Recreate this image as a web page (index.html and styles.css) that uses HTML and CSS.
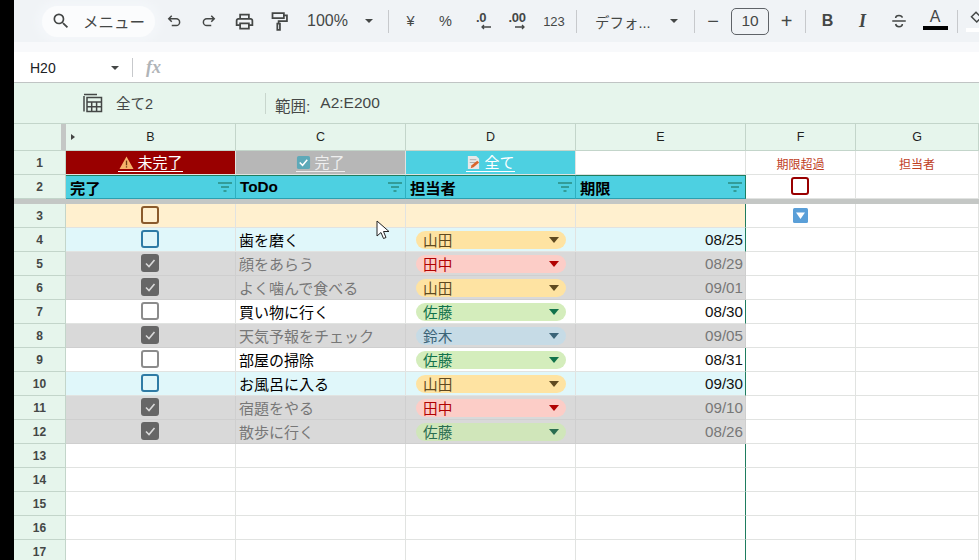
FILE: index.html
```html
<!DOCTYPE html>
<html lang="ja">
<head>
<meta charset="utf-8">
<title>ToDo</title>
<link rel="stylesheet" href="styles.css">
</head>
<body>
<div class="app">
  <div class="strip"></div>
  <div class="main">
    <div class="toolwrap">
      <div class="toolbar">
        <div class="pill">
          <svg class="ic-search" viewBox="0 0 24 24"><path d="M15.5 14h-.79l-.28-.27A6.47 6.47 0 0 0 16 9.5 6.5 6.5 0 1 0 9.5 16c1.61 0 3.09-.59 4.23-1.57l.27.28v.79l5 4.99L20.49 19l-4.99-5zm-6 0C7.01 14 5 11.99 5 9.5S7.01 5 9.5 5 14 7.01 14 9.5 11.99 14 9.5 14z"/></svg>
          <span class="pilltext">メニュー</span>
        </div>
        <div class="tool w35"><svg class="ic" viewBox="0 0 24 24"><path class="st" d="M9 5 5 9l4 4M5 9h10a4.500 4.500 0 0 1 0 9H9"/></svg></div>
        <div class="tool w35"><svg class="ic" viewBox="0 0 24 24"><path class="st" d="m15 5 4 4-4 4M19 9H9a4.500 4.500 0 0 0 0 9h6"/></svg></div>
        <div class="tool w36"><svg class="ic lg" viewBox="0 0 24 24"><path d="M19 8h-1V3H6v5H5c-1.660 0-3 1.340-3 3v6h4v4h12v-4h4v-6c0-1.660-1.340-3-3-3zM8 5h8v3H8V5zm8 12v2H8v-4h8v2zm2-2v-2H6v2H4v-4c0-.550.450-1 1-1h14c.550 0 1 .450 1 1v4h-2z"/></svg></div>
        <div class="tool w35"><svg class="ic lg" viewBox="0 0 24 24"><path class="st" d="M4 2.500h13v5.500H4zM17 5h3.500v6.500H11v3M9.500 14.500h3v7h-3z"/></svg></div>
        <div class="zoomval">100%</div>
        <div class="tool w18"><i class="caret"></i></div>
        <div class="sep sep1"></div>
        <div class="tool w35 small m1">¥</div>
        <div class="tool w35 small">%</div>
        <div class="tool w36 deci"><span class="dec">.0</span><svg class="arr arr-l" viewBox="0 0 12 6"><path class="st2" d="M11 3H2M4 1 2 3l2 2"/></svg></div>
        <div class="tool w36 deci"><span class="dec">.00</span><svg class="arr" viewBox="0 0 12 6"><path class="st2" d="M1 3h9M8 1l2 2-2 2"/></svg></div>
        <div class="tool w38 num">123</div>
        <div class="sep sep2"></div>
        <div class="fontname">デフォ...</div>
        <div class="tool w18"><i class="caret"></i></div>
        <div class="sep sep3"></div>
        <div class="tool w35 sym">−</div>
        <div class="sizebox">10</div>
        <div class="tool w35 sym">+</div>
        <div class="sep sep4"></div>
        <div class="tool w35 bold">B</div>
        <div class="tool w35 ital">I</div>
        <div class="tool w37"><svg class="ic" viewBox="0 0 24 24"><path class="st" d="M16.500 7.500C16 5.500 14 4.500 12 4.500S7.500 5.500 7.500 8M3 12h18M7.500 16c.5 2.500 2.500 3.500 4.500 3.500s4.500-1 4.500-3.500"/></svg></div>
        <div class="tool w35 colora"><span class="alabel">A</span><i class="abar"></i></div>
        <div class="sep sep5"></div>
        <div class="tool w35 fill"><svg class="ic" viewBox="0 0 24 24"><path class="st" d="m12 3 7 7-6 6-7-7z"/></svg><i class="fbar"></i></div>
      </div>
      <div class="fade"></div>
    </div>
    <div class="formula">
      <div class="namebox">H20</div>
      <i class="caret f-caret"></i>
      <div class="sep f-sep"></div>
      <div class="fx">fx</div>
    </div>
    <div class="sumbar">
      <svg class="ic-calc" viewBox="0 0 20 20"><path class="st3" d="M1 3v15.500M1 1.500h13M4 4.500h14.500v14H4zM4 9h14.500M4 13.800h14.500M8.700 9v9.500M13.600 9v9.500"/></svg>
      <span class="sumname">全て2</span>
      <div class="sep s-sep"></div>
      <span class="rangelabel">範囲:</span>
      <span class="rangeval">A2:E200</span>
    </div>
    <div class="sheet">
      <div class="row">
        <div class="cell head corner"></div>
        <div class="cell head colb"><i class="tri"></i>B</div>
        <div class="cell head">C</div>
        <div class="cell head">D</div>
        <div class="cell head">E</div>
        <div class="cell head">F</div>
        <div class="cell head">G</div>
      </div>
      <div class="row">
        <div class="cell rn">1</div>
        <div class="cell tab t-red"><a class="tablink"><svg class="emoji em-warn" viewBox="0 0 16 16"><path d="M8 1.500 15.500 15H.5z" fill="#f6b26b"/><rect x="7.300" y="6" width="1.400" height="5" fill="#6b3a12"/><rect x="7.300" y="12" width="1.400" height="1.400" fill="#6b3a12"/></svg>未完了</a></div>
        <div class="cell tab t-gray"><a class="tablink l-soft"><svg class="emoji" viewBox="0 0 16 16"><rect x="1" y="1" width="14" height="14" rx="2" fill="#5ea9b8"/><path d="m4 8 3 3 5-6" fill="none" stroke="#fff" stroke-width="1.600"/></svg>完了</a></div>
        <div class="cell tab t-teal"><a class="tablink"><svg class="emoji" viewBox="0 0 16 16"><path d="M2 1h9l3 3v11H2z" fill="#e8e8e8"/><path d="M4 5h7M4 8h7" stroke="#aaa"/><path d="m5 14 1-3 6-5 2 2-6 5z" fill="#d9652b"/></svg>全て</a></div>
        <div class="cell"></div>
        <div class="cell note">期限超過</div>
        <div class="cell note">担当者</div>
      </div>
      <div class="row">
        <div class="cell rn">2</div>
        <div class="cell thd">完了<svg class="flt" viewBox="0 0 14 10"><path d="M0 1h14M3 5h8M5.500 9h3"/></svg></div>
        <div class="cell thd">ToDo<svg class="flt" viewBox="0 0 14 10"><path d="M0 1h14M3 5h8M5.500 9h3"/></svg></div>
        <div class="cell thd">担当者<svg class="flt" viewBox="0 0 14 10"><path d="M0 1h14M3 5h8M5.500 9h3"/></svg></div>
        <div class="cell thd edge">期限<svg class="flt" viewBox="0 0 14 10"><path d="M0 1h14M3 5h8M5.500 9h3"/></svg></div>
        <div class="cell ctr"><i class="box b-red"></i></div>
        <div class="cell"></div>
      </div>
      <div class="freeze"></div>
      <div class="row r-orange">
        <div class="cell rn">3</div>
        <div class="cell ctr"><i class="box b-brown"></i></div>
        <div class="cell"></div>
        <div class="cell"></div>
        <div class="cell edge"></div>
        <div class="cell ctr plain"><svg class="fltbtn" viewBox="0 0 15 15"><rect width="15" height="15" rx="1.500" fill="#5a9fd8"/><path d="M3 4.500h9l-4.500 6.500z" fill="#fff"/></svg></div>
        <div class="cell plain"></div>
      </div>
      <div class="row r-blue">
        <div class="cell rn">4</div>
        <div class="cell ctr"><i class="box b-blue"></i></div>
        <div class="cell txt">歯を磨く</div>
        <div class="cell chipc"><span class="chip yellow">山田<i class="ca"></i></span></div>
        <div class="cell date edge">08/25</div>
        <div class="cell plain"></div>
        <div class="cell plain"></div>
      </div>
      <div class="row r-done">
        <div class="cell rn">5</div>
        <div class="cell ctr"><i class="box checked"><svg viewBox="0 0 14 14"><path d="m3 7.500 3 3 5.500-6.500"/></svg></i></div>
        <div class="cell txt">顔をあらう</div>
        <div class="cell chipc"><span class="chip red">田中<i class="ca"></i></span></div>
        <div class="cell date edge">08/29</div>
        <div class="cell plain"></div>
        <div class="cell plain"></div>
      </div>
      <div class="row r-done">
        <div class="cell rn">6</div>
        <div class="cell ctr"><i class="box checked"><svg viewBox="0 0 14 14"><path d="m3 7.500 3 3 5.500-6.500"/></svg></i></div>
        <div class="cell txt">よく噛んで食べる</div>
        <div class="cell chipc"><span class="chip yellow">山田<i class="ca"></i></span></div>
        <div class="cell date edge">09/01</div>
        <div class="cell plain"></div>
        <div class="cell plain"></div>
      </div>
      <div class="row">
        <div class="cell rn">7</div>
        <div class="cell ctr"><i class="box"></i></div>
        <div class="cell txt">買い物に行く</div>
        <div class="cell chipc"><span class="chip green">佐藤<i class="ca"></i></span></div>
        <div class="cell date edge">08/30</div>
        <div class="cell plain"></div>
        <div class="cell plain"></div>
      </div>
      <div class="row r-done">
        <div class="cell rn">8</div>
        <div class="cell ctr"><i class="box checked"><svg viewBox="0 0 14 14"><path d="m3 7.500 3 3 5.500-6.500"/></svg></i></div>
        <div class="cell txt">天気予報をチェック</div>
        <div class="cell chipc"><span class="chip blue">鈴木<i class="ca"></i></span></div>
        <div class="cell date edge">09/05</div>
        <div class="cell plain"></div>
        <div class="cell plain"></div>
      </div>
      <div class="row">
        <div class="cell rn">9</div>
        <div class="cell ctr"><i class="box"></i></div>
        <div class="cell txt">部屋の掃除</div>
        <div class="cell chipc"><span class="chip green">佐藤<i class="ca"></i></span></div>
        <div class="cell date edge">08/31</div>
        <div class="cell plain"></div>
        <div class="cell plain"></div>
      </div>
      <div class="row r-blue">
        <div class="cell rn">10</div>
        <div class="cell ctr"><i class="box b-blue"></i></div>
        <div class="cell txt">お風呂に入る</div>
        <div class="cell chipc"><span class="chip yellow">山田<i class="ca"></i></span></div>
        <div class="cell date edge">09/30</div>
        <div class="cell plain"></div>
        <div class="cell plain"></div>
      </div>
      <div class="row r-done">
        <div class="cell rn">11</div>
        <div class="cell ctr"><i class="box checked"><svg viewBox="0 0 14 14"><path d="m3 7.500 3 3 5.500-6.500"/></svg></i></div>
        <div class="cell txt">宿題をやる</div>
        <div class="cell chipc"><span class="chip red">田中<i class="ca"></i></span></div>
        <div class="cell date edge">09/10</div>
        <div class="cell plain"></div>
        <div class="cell plain"></div>
      </div>
      <div class="row r-done">
        <div class="cell rn">12</div>
        <div class="cell ctr"><i class="box checked"><svg viewBox="0 0 14 14"><path d="m3 7.500 3 3 5.500-6.500"/></svg></i></div>
        <div class="cell txt">散歩に行く</div>
        <div class="cell chipc"><span class="chip green">佐藤<i class="ca"></i></span></div>
        <div class="cell date edge">08/26</div>
        <div class="cell plain"></div>
        <div class="cell plain"></div>
      </div>
      <div class="row"><div class="cell rn">13</div><div class="cell"></div><div class="cell"></div><div class="cell"></div><div class="cell edge"></div><div class="cell"></div><div class="cell"></div></div>
      <div class="row"><div class="cell rn">14</div><div class="cell"></div><div class="cell"></div><div class="cell"></div><div class="cell edge"></div><div class="cell"></div><div class="cell"></div></div>
      <div class="row"><div class="cell rn">15</div><div class="cell"></div><div class="cell"></div><div class="cell"></div><div class="cell edge"></div><div class="cell"></div><div class="cell"></div></div>
      <div class="row"><div class="cell rn">16</div><div class="cell"></div><div class="cell"></div><div class="cell"></div><div class="cell edge"></div><div class="cell"></div><div class="cell"></div></div>
      <div class="row"><div class="cell rn">17</div><div class="cell"></div><div class="cell"></div><div class="cell"></div><div class="cell edge"></div><div class="cell"></div><div class="cell"></div></div>
      <svg class="cursor" viewBox="0 0 14 21"><path d="M1 1v15l4-3.500 2.500 6 2.500-1-2.500-6H13z" fill="#fff" stroke="#222" stroke-width="1"/></svg>
    </div>
  </div>
</div>
</body>
</html>
```

FILE: styles.css
```css
* { box-sizing: border-box; }
html, body { margin: 0; height: 100%; overflow: hidden; }
body { font-family: "Liberation Sans", "Noto Sans CJK JP", sans-serif; color: #000; background: #fff; }
.app { display: flex; height: 560px; overflow: hidden; }
.strip { width: 14px; flex: none; background: #000; }
.main { flex: 1; min-width: 0; display: flex; flex-direction: column; overflow: hidden; }

/* toolbar */
.toolwrap { height: 52px; flex: none; background: #f8f9fb; }
.toolbar { height: 42px; background: #f0f3f6; display: flex; align-items: center; padding-left: 28px; color: #444746; overflow: hidden; }
.fade { height: 10px; }
.pill { width: 113px; height: 31px; flex: none; margin-right: 1px; border-radius: 16px; background: #fbfcfd; box-shadow: 0 0 6px 6px #f3f6f9; display: flex; align-items: center; padding-left: 9px; }
.ic-search { width: 20px; height: 20px; fill: #444746; flex: none; }
.pilltext { margin-left: 12px; font-size: 15.500px; color: #444746; white-space: nowrap; }
.tool { flex: none; height: 30px; display: flex; align-items: center; justify-content: center; position: relative; }
.w18 { width: 18px; } .w35 { width: 35px; } .w36 { width: 36px; } .w37 { width: 37px; } .w38 { width: 38px; }
.ic { width: 18px; height: 18px; fill: #444746; }
.ic.lg { width: 21px; height: 21px; }
.st { fill: none; stroke: #444746; stroke-width: 2; }
.st2 { fill: none; stroke: #444746; stroke-width: 1.300; }
.st3 { fill: none; stroke: #444746; stroke-width: 1.500; }
.zoomval { width: 63px; flex: none; padding-left: 10px; font-size: 16px; color: #444746; }
.caret { display: block; width: 0; height: 0; border-left: 4.500px solid transparent; border-right: 4.500px solid transparent; border-top: 4.500px solid #444746; }
.sep { width: 1px; flex: none; background: #c7c9cc; }
.toolbar .sep { height: 23px; }
.sep1 { margin-left: 10px; }
.m1 { margin-left: 4px; }
.small { font-size: 14.500px; }
.deci { flex-direction: column; line-height: 1; }
.dec { font-size: 13px; font-weight: 700; letter-spacing: -.3px; margin-top: -2px; }
.arr { width: 12px; height: 6px; margin-left: 6px; }
.arr-l { margin-left: 10px; }
.num { font-size: 13px; }
.sep2 { margin-left: 3px; }
.fontname { width: 88px; flex: none; padding-left: 18px; font-size: 14.500px; white-space: nowrap; color: #444746; }
.sep3 { margin-left: 11px; }
.sym { font-size: 20px; font-weight: 400; }
.sizebox { width: 38px; height: 27px; flex: none; border: 1px solid #5f6368; border-radius: 5px; display: flex; align-items: center; justify-content: center; font-size: 15.500px; color: #444746; }
.sep3 + .sym { width: 36px; }
.sep4 { margin-left: 1px; }
.bold { font-size: 16px; font-weight: 700; margin-left: 4px; }
.ital { font-family: "Liberation Serif", serif; font-style: italic; font-weight: 700; font-size: 18px; }
.colora { flex-direction: column; width: 26px; margin-left: 5px; }
.alabel { font-size: 16px; line-height: 16px; margin-top: -3px; }
.abar { width: 25px; height: 4px; background: #000; margin-top: 1px; }
.sep5 { margin-left: 9px; }
.fill { flex-direction: column; }
.fbar { width: 20px; height: 4px; background: #fff; }

/* formula bar */
.formula { height: 31px; flex: none; background: #fff; display: flex; align-items: center; border-bottom: 1px solid #c0c4c4; padding-top: 1px; }
.namebox { width: 96px; padding-left: 16px; font-size: 14px; color: #202124; flex: none; }
.f-caret { flex: none; margin-left: 1px; }
.formula .sep { height: 19px; margin-left: 13px; }
.fx { margin-left: 13px; font-family: "Liberation Serif", serif; font-style: italic; font-weight: 700; font-size: 18px; color: #b0b4b8; }

/* summary bar */
.sumbar { height: 40px; flex: none; background: #e6f5ec; display: flex; align-items: center; color: #444746; }
.ic-calc { width: 20px; height: 20px; margin-left: 69px; flex: none; }
.sumname { margin-left: 13px; width: 149px; font-size: 14.500px; flex: none; padding-bottom: 2px; }
.sumbar .sep { height: 21px; background: #c8d6cd; }
.rangelabel { margin-left: 9px; font-size: 15.500px; padding-top: 4px; }
.rangeval { margin-left: 10px; font-size: 15.500px; }

/* sheet */
.sheet { position: relative; flex: 1; display: grid; grid-template-columns: 52px 170px 170px 170px 170px 110px 1fr; grid-template-rows: 27px 24px 24px 5px repeat(15, 24px); border-top: 1px solid #c3d5ca; font-size: 15px; }
.row { display: contents; }
.cell { border-right: 1px solid #e1e3e1; border-bottom: 1px solid #e1e3e1; display: flex; align-items: center; min-width: 0; overflow: hidden; white-space: nowrap; background: #fff; }
.head { background: #e6f5ec; border-color: #c3d5ca; justify-content: center; font-size: 12.500px; color: #1f1f1f; position: relative; }
.corner { border-right: 5px solid #c4c7c5; }
.tri { position: absolute; left: 5px; top: 10px; width: 0; height: 0; border-left: 4px solid #444; border-top: 3.500px solid transparent; border-bottom: 3.500px solid transparent; }
.rn { background: #e6f5ec; border-color: #c3d5ca; justify-content: center; font-size: 12px; font-weight: 700; color: #444746; }
.tab { justify-content: center; }
.t-red { background: #990000; }
.t-gray { background: #b7b7b7; }
.t-teal { background: #4dd0e1; }
.tablink { color: #fff; border-bottom: 1px solid currentColor; line-height: 17px; font-size: 15px; display: inline-flex; align-items: center; }
.l-soft { color: #eee; }
.emoji { width: 15px; height: 15px; margin-right: 3px; flex: none; }
.em-warn { width: 17px; height: 15px; margin-right: 2px; }
.note { justify-content: center; color: #c0401f; font-size: 12px; padding-top: 2px; }
.thd { background: #4dd0e1; font-weight: 700; font-size: 15.300px; padding-left: 4px; border-top: 1px solid #1f7d5f; border-bottom: 1px solid #2aa0b0; border-right-color: #2fb0c0; justify-content: space-between; padding-right: 3px; }
.flt { width: 14px; height: 10px; fill: none; stroke: #2a8a80; stroke-width: 1.300; flex: none; }
.edge { border-right: 1px solid #1f7d5f; }
.thd.edge { border-right-color: #1f7d5f; }
.freeze { grid-column: 1 / -1; background: #c4c7c5; }
.ctr { justify-content: center; }
.txt { padding-left: 3px; }
.date { justify-content: flex-end; padding-right: 2px; font-size: 15.200px; color: #111; }
.box { display: block; width: 18px; height: 18px; margin: 0 1px 1px 0; border: 2px solid #8c8c8c; border-radius: 3px; background: transparent; }
.b-red { border-color: #990000; }
.b-brown { border-color: #8a5a2b; }
.b-blue { border-color: #2e7ba5; }
.checked { background: #666; border-color: #666; position: relative; }
.checked svg { position: absolute; inset: 0; width: 14px; height: 14px; fill: none; stroke: #d9d9d9; stroke-width: 1.600; }
.chipc { padding-left: 10px; }
.chip { width: 150px; height: 18px; border-radius: 9px; padding: 0 7px 0 7px; display: flex; align-items: center; justify-content: space-between; font-size: 14.670px; }
.ca { width: 0; height: 0; border-left: 5px solid transparent; border-right: 5px solid transparent; border-top: 6px solid currentColor; }
.yellow { background: #fee3a2; color: #473821; }
.red { background: #ffcfc9; color: #b10202; }
.green { background: #d4edbc; color: #11734b; }
.blue { background: #c6dbe6; color: #215a6c; }
.r-orange .cell:not(.rn):not(.plain) { background: #fff0cf; }
.r-blue .cell:not(.rn):not(.plain) { background: #e0f7fa; }
.r-done .cell:not(.rn):not(.plain) { background: #d9d9d9; color: #777; border-color: #cfcfcf; }
.r-done .cell.edge { border-right-color: #1f7d5f; }
.r-done .yellow { color: #5f4a20; }
.r-done .red { background: #fccdc7; color: #b10202; }
.r-done .green { background: #d0e6ba; color: #2a6e50; }
.r-done .blue { color: #3b6478; }
.r-blue .yellow { color: #5f4a20; }
.fltbtn { width: 15px; height: 15px; }
.cursor { position: absolute; left: 362px; top: 96px; width: 14px; height: 21px; }
```
